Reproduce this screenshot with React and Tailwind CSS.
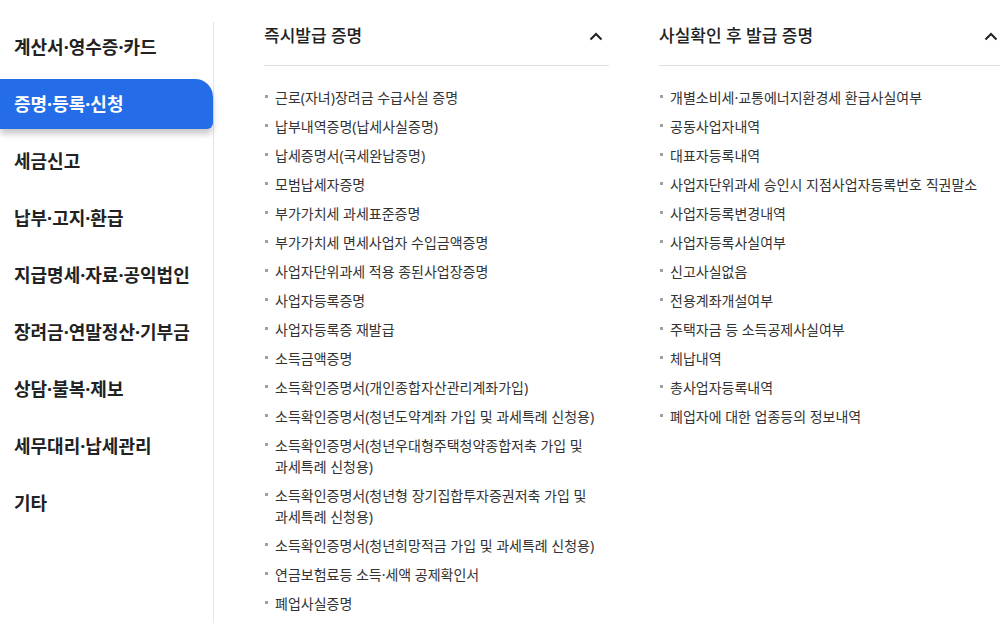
import React from "react";

const nav = [
  "계산서·영수증·카드",
  "증명·등록·신청",
  "세금신고",
  "납부·고지·환급",
  "지급명세·자료·공익법인",
  "장려금·연말정산·기부금",
  "상담·불복·제보",
  "세무대리·납세관리",
  "기타",
];

const col1 = [
  "근로(자녀)장려금 수급사실 증명",
  "납부내역증명(납세사실증명)",
  "납세증명서(국세완납증명)",
  "모범납세자증명",
  "부가가치세 과세표준증명",
  "부가가치세 면세사업자 수입금액증명",
  "사업자단위과세 적용 종된사업장증명",
  "사업자등록증명",
  "사업자등록증 재발급",
  "소득금액증명",
  "소득확인증명서(개인종합자산관리계좌가입)",
  "소득확인증명서(청년도약계좌 가입 및 과세특례 신청용)",
  "소득확인증명서(청년우대형주택청약종합저축 가입 및 과세특례 신청용)",
  "소득확인증명서(청년형 장기집합투자증권저축 가입 및 과세특례 신청용)",
  "소득확인증명서(청년희망적금 가입 및 과세특례 신청용)",
  "연금보험료등 소득·세액 공제확인서",
  "폐업사실증명",
];

const col2 = [
  "개별소비세·교통에너지환경세 환급사실여부",
  "공동사업자내역",
  "대표자등록내역",
  "사업자단위과세 승인시 지점사업자등록번호 직권말소",
  "사업자등록변경내역",
  "사업자등록사실여부",
  "신고사실없음",
  "전용계좌개설여부",
  "주택자금 등 소득공제사실여부",
  "체납내역",
  "총사업자등록내역",
  "폐업자에 대한 업종등의 정보내역",
];

function Chevron() {
  return (
    <svg width="14" height="9" viewBox="0 0 14 9" fill="none">
      <path d="M1.5 7.5 L7 2 L12.5 7.5" stroke="#222" strokeWidth="2" />
    </svg>
  );
}

function Column({ title, items }) {
  return (
    <div className="w-[345px] shrink-0">
      <div className="flex items-center justify-between pt-[24px] pb-[17px] border-b border-[#dddde6]">
        <span className="text-[17px] leading-[24px] font-medium text-[#222]">{title}</span>
        <span className="mr-[6px] flex items-center"><Chevron /></span>
      </div>
      <ul className="mt-[21px] flex flex-col gap-[8px]">
        {items.map((t) => (
          <li key={t} className="relative pl-[11px] text-[14px] leading-[21px] text-[#333] break-keep">
            <span className="absolute left-[1px] top-[8px] w-[3px] h-[3px] bg-[#a0a0a0]"></span>
            {t}
          </li>
        ))}
      </ul>
    </div>
  );
}

export default function App() {
  return (
    <div
      className="flex w-[1000px] h-[623px] overflow-hidden bg-white"
      style={{ fontFamily: "'Noto Sans', 'Noto Sans CJK KR', sans-serif" }}
    >
      <div className="w-[214px] shrink-0 mt-[22px] border-r border-[#e4e4f6] flex flex-col gap-[7px]">
        {nav.map((n, i) =>
          i === 1 ? (
            <div
              key={n}
              className="h-[50px] flex items-center pl-[14px] text-[18px] font-bold text-white bg-[#256ce9] rounded-tr-[18px] rounded-br-[6px] shadow-[0_5px_6px_rgba(0,0,0,0.22)]"
            >
              {n}
            </div>
          ) : (
            <div key={n} className="h-[50px] flex items-center pl-[14px] text-[18px] font-bold text-[#222]">
              {n}
            </div>
          )
        )}
      </div>
      <div className="flex gap-[50px] pl-[50px]">
        <Column title="즉시발급 증명" items={col1} />
        <Column title="사실확인 후 발급 증명" items={col2} />
      </div>
    </div>
  );
}
